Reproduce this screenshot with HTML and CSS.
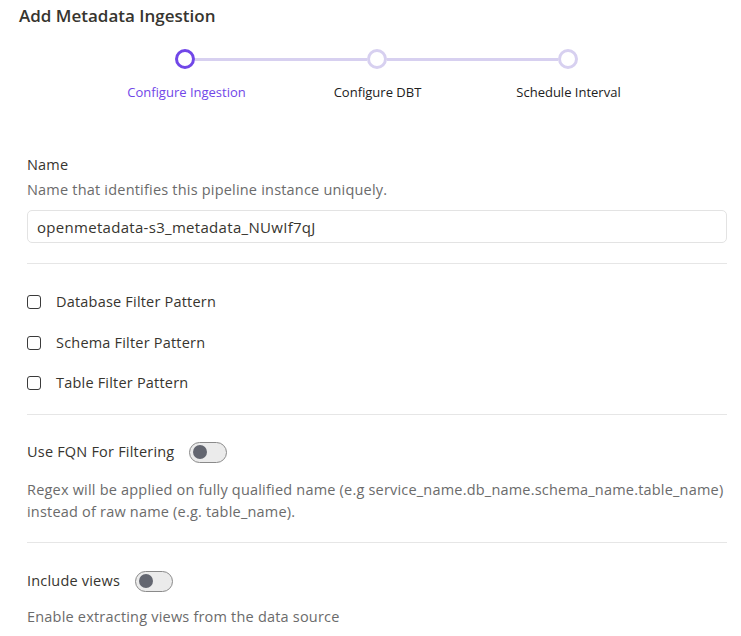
FILE: index.html
```html
<!DOCTYPE html>
<html lang="en">
<head>
<meta charset="utf-8">
<title>Add Metadata Ingestion</title>
<link rel="stylesheet" href="styles.css">
</head>
<body>
<h1 class="title">Add Metadata Ingestion</h1>

<div class="stepper">
  <div class="track">
    <span class="dot dot-active"></span>
    <span class="bar"></span>
    <span class="dot"></span>
    <span class="bar"></span>
    <span class="dot"></span>
  </div>
  <div class="step-labels">
    <span class="step-label step-label-active">Configure Ingestion</span>
    <span class="step-label">Configure DBT</span>
    <span class="step-label">Schedule Interval</span>
  </div>
</div>

<form class="form">
  <div class="field">
    <label class="label" for="name">Name</label>
    <p class="help help-name">Name that identifies this pipeline instance uniquely.</p>
    <input class="input" id="name" type="text" value="openmetadata-s3_metadata_NUwIf7qJ">
  </div>

  <hr class="divider divider-first">

  <div class="checks">
    <label class="check"><span class="box"></span>Database Filter Pattern</label>
    <label class="check"><span class="box"></span>Schema Filter Pattern</label>
    <label class="check"><span class="box"></span>Table Filter Pattern</label>
  </div>

  <hr class="divider divider-checks">

  <div class="field field-toggle">
    <div class="toggle-row">
      <span class="label">Use FQN For Filtering</span>
      <span class="switch"><span class="knob"></span></span>
    </div>
    <p class="help help-toggle">Regex will be applied on fully qualified name (e.g service_name.db_name.schema_name.table_name) instead of raw name (e.g. table_name).</p>
  </div>

  <hr class="divider divider-fqn">

  <div class="field field-toggle field-views">
    <div class="toggle-row">
      <span class="label">Include views</span>
      <span class="switch"><span class="knob"></span></span>
    </div>
    <p class="help help-views">Enable extracting views from the data source</p>
  </div>
</form>
</body>
</html>
```

FILE: styles.css
```css
* { box-sizing: border-box; }

html, body {
  margin: 0;
  padding: 0;
  background: #ffffff;
  font-family: "Open Sans", "Noto Sans", sans-serif;
  color: #37352f;
  overflow: hidden;
}

.title {
  margin: 0;
  padding: 4px 0 0 19px;
  font-size: 17px;
  line-height: 24px;
  font-weight: 600;
  color: #37352f;
}

.stepper {
  margin-top: 21px;
  display: flex;
  flex-direction: column;
  align-items: center;
  width: 741px;
  padding-left: 12px;
}

.track {
  display: flex;
  align-items: center;
  width: 403px;
}

.dot {
  width: 20px;
  height: 20px;
  border-radius: 50%;
  border: 3px solid #d7d0f0;
  background: #ffffff;
  flex: none;
}

.dot-active {
  border-color: #7147e8;
}

.bar {
  flex: 1;
  height: 3px;
  background: #d7d0f0;
}

.step-labels {
  display: grid;
  grid-template-columns: repeat(3, 191px);
  margin-top: 13px;
  margin-left: 2px;
}

.step-label {
  text-align: center;
  font-size: 13px;
  line-height: 20px;
  color: #212121;
}

.step-label-active {
  color: #7147e8;
}

.form {
  margin: 52px 14px 0 27px;
  width: 700px;
  font-size: 14.5px;
  letter-spacing: 0.2px;
}

.field {
  display: flex;
  flex-direction: column;
}

.label {
  font-size: 14.5px;
  line-height: 22px;
  color: #37352f;
}

.help {
  margin: 0;
  font-size: 14.5px;
  line-height: 22px;
  color: #6b6b6b;
}

.help-name {
  margin-top: 3px;
}

.input {
  margin-top: 9px;
  height: 33px;
  border: 1px solid #e3e3e3;
  border-radius: 5px;
  padding: 0 9px;
  font-family: inherit;
  font-size: 15px;
  letter-spacing: 0.3px;
  color: #37352f;
  background: #ffffff;
  outline: none;
}

.divider {
  margin: 0;
  border: none;
  height: 1px;
  background: #e6e6e6;
}

.divider-first { margin-top: 20px; }

.checks {
  display: flex;
  flex-direction: column;
  gap: 18.5px;
  margin-top: 27px;
}

.check {
  display: flex;
  align-items: center;
  gap: 15px;
  font-size: 14.5px;
  line-height: 22px;
  color: #37352f;
}

.box {
  width: 14px;
  height: 14px;
  border: 1.5px solid #3a3a3a;
  border-radius: 3px;
  flex: none;
}

.divider-checks { margin-top: 20px; }

.field-toggle {
  margin-top: 26px;
}

.field-views {
  margin-top: 27px;
}

.toggle-row {
  display: flex;
  align-items: center;
  gap: 15px;
  height: 22px;
}

.switch {
  width: 38px;
  height: 21px;
  border: 1px solid #8a8a8a;
  border-radius: 11px;
  background: #ebebeb;
  display: flex;
  align-items: center;
  padding-left: 3px;
}

.knob {
  width: 14px;
  height: 14px;
  border-radius: 50%;
  background: #636670;
}

.help-toggle {
  margin-top: 16px;
}

.help-views {
  margin-top: 14px;
}

.divider-fqn { margin-top: 19px; }
```
